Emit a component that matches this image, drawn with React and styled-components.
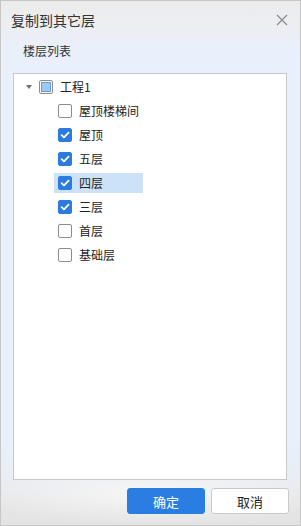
import React, { useState } from 'react';
import styled, { createGlobalStyle } from 'styled-components';

const GlobalStyle = createGlobalStyle`
  html, body {
    margin: 0;
    padding: 0;
  }
  body {
    font-family: "Microsoft YaHei", "Noto Sans CJK SC", "Noto Sans", sans-serif;
    color: #333;
  }
`;

const Dialog = styled.div`
  box-sizing: border-box;
  width: 301px;
  height: 526px;
  border: 1px solid #c6c6c6;
  position: relative;
  display: flex;
  flex-direction: column;
  background:
    radial-gradient(ellipse 60% 6% at 50% 94%, rgba(248, 248, 248, 0.9), rgba(248, 248, 248, 0) 100%),
    linear-gradient(to bottom, #ebebeb 0px, #eceef1 22px, #e9f0fb 50px, #e8f0fc 440px, #e9eef6 470px, #e6e6e6 500px, #e3e3e3 526px);
`;

const TitleBar = styled.div`
  height: 38px;
  display: flex;
  align-items: center;
  justify-content: space-between;
  padding: 0 10px 0 10px;
  flex: none;
`;

const Title = styled.div`
  font-size: 14px;
  color: #333;
`;

const CloseButton = styled.button`
  border: none;
  background: transparent;
  padding: 0;
  width: 16px;
  height: 16px;
  display: flex;
  align-items: center;
  justify-content: center;
  cursor: pointer;
`;

const SectionLabel = styled.div`
  font-size: 12px;
  color: #333;
  padding: 2px 0 0 22px;
  height: 20px;
  line-height: 20px;
  flex: none;
`;

const Panel = styled.div`
  margin: 12px 13px 0 12px;
  height: 407px;
  background: #fff;
  border: 1px solid #c8c8c8;
  padding: 1px 0 0 0;
  box-sizing: border-box;
  flex: none;
`;

const Row = styled.div`
  height: 24px;
  display: flex;
  align-items: center;
  padding-left: ${(p) => p.$indent}px;
`;

const RowInner = styled.div`
  box-sizing: border-box;
  display: flex;
  align-items: center;
  height: 20px;
  min-width: ${(p) => (p.$selected ? '89px' : '0')};
  padding: 0 14px 0 4px;
  background: ${(p) => (p.$selected ? '#cce2f8' : 'transparent')};
  cursor: default;
`;

const Caret = styled.span`
  width: 0;
  height: 0;
  border-left: 3.5px solid transparent;
  border-right: 3.5px solid transparent;
  border-top: 4px solid #707070;
  margin: 0 7px 0 0;
`;

const Box = styled.span`
  box-sizing: border-box;
  width: 14px;
  height: 14px;
  border-radius: 2px;
  border: 1px solid ${(p) => (p.$checked ? '#2c7ce0' : '#8d8d8d')};
  background: ${(p) => (p.$checked ? '#2c7ce0' : '#fff')};
  display: flex;
  align-items: center;
  justify-content: center;
  flex: none;
`;

const PartialFill = styled.span`
  width: 8px;
  height: 8px;
  background: #9ec8f6;
  border: 1px solid #5d9ee6;
`;

const Label = styled.span`
  font-size: 12px;
  color: #222;
  margin-left: 7px;
  line-height: 20px;
`;

const Footer = styled.div`
  display: flex;
  justify-content: flex-end;
  gap: 6px;
  padding: 8px 11px 0 0;
`;

const Button = styled.button`
  box-sizing: border-box;
  width: 78px;
  height: 26px;
  border-radius: 3px;
  font-family: inherit;
  font-size: 13px;
  cursor: pointer;
  border: 1px solid ${(p) => (p.$primary ? '#2a7de1' : '#c9c9c9')};
  background: ${(p) => (p.$primary ? '#2a7de1' : '#fff')};
  color: ${(p) => (p.$primary ? '#fff' : '#222')};
`;

const Grip = styled.div`
  position: absolute;
  right: 2px;
  bottom: 2px;
  width: 8px;
  height: 8px;
`;

const Check = () => (
  <svg width="10" height="10" viewBox="0 0 10 10">
    <path d="M1.6 5.2 L4 7.4 L8.6 2.6" fill="none" stroke="#fff" strokeWidth="1.8" strokeLinecap="round" strokeLinejoin="round" />
  </svg>
);

const floors = [
  { name: '屋顶楼梯间', checked: false },
  { name: '屋顶', checked: true },
  { name: '五层', checked: true },
  { name: '四层', checked: true, selected: true },
  { name: '三层', checked: true },
  { name: '首层', checked: false },
  { name: '基础层', checked: false },
];

export default function App() {
  const [items, setItems] = useState(floors);

  const toggle = (i) => {
    setItems(items.map((f, idx) => (idx === i ? { ...f, checked: !f.checked } : f)));
  };

  return (
    <>
      <GlobalStyle />
      <Dialog>
        <TitleBar>
          <Title>复制到其它层</Title>
          <CloseButton aria-label="关闭">
            <svg width="12" height="12" viewBox="0 0 12 12">
              <path d="M1 1 L11 11 M11 1 L1 11" stroke="#8a8a8a" strokeWidth="1.2" fill="none" />
            </svg>
          </CloseButton>
        </TitleBar>
        <SectionLabel>楼层列表</SectionLabel>
        <Panel>
          <Row $indent={8}>
            <RowInner>
              <Caret />
              <Box>
                <PartialFill />
              </Box>
              <Label>工程1</Label>
            </RowInner>
          </Row>
          {items.map((f, i) => (
            <Row key={f.name} $indent={40} onClick={() => toggle(i)}>
              <RowInner $selected={f.selected}>
                <Box $checked={f.checked}>{f.checked && <Check />}</Box>
                <Label>{f.name}</Label>
              </RowInner>
            </Row>
          ))}
        </Panel>
        <Footer>
          <Button $primary>确定</Button>
          <Button>取消</Button>
        </Footer>
        <Grip>
          <svg width="8" height="8" viewBox="0 0 8 8">
            <rect x="6" y="0" width="2" height="2" fill="#777" />
            <rect x="3" y="3" width="2" height="2" fill="#777" />
            <rect x="6" y="3" width="2" height="2" fill="#777" />
            <rect x="0" y="6" width="2" height="2" fill="#777" />
            <rect x="3" y="6" width="2" height="2" fill="#777" />
            <rect x="6" y="6" width="2" height="2" fill="#777" />
          </svg>
        </Grip>
      </Dialog>
    </>
  );
}
